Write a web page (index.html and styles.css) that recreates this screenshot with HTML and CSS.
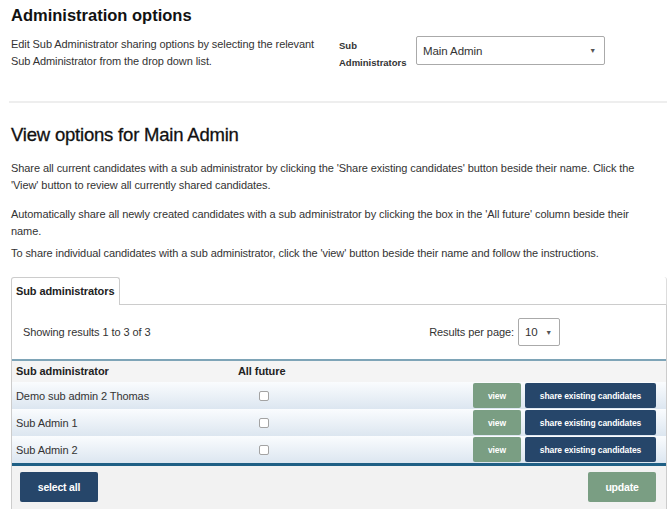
FILE: index.html
```html
<!DOCTYPE html>
<html>
<head>
<meta charset="utf-8">
<link rel="stylesheet" href="styles.css">
</head>
<body>
<div class="page">
  <h1 class="title">Administration options</h1>
  <div class="top">
    <p class="top-text">Edit Sub Administrator sharing options by selecting the relevant Sub Administrator from the drop down list.</p>
    <div class="top-label">Sub<br>Administrators</div>
    <div class="select big"><span>Main Admin</span><span class="arrow">▼</span></div>
  </div>
  <div class="divider"></div>
  <h2 class="subtitle">View options for Main Admin</h2>
  <p class="info">Share all current candidates with a sub administrator by clicking the 'Share existing candidates' button beside their name. Click the 'View' button to review all currently shared candidates.</p>
  <p class="info">Automatically share all newly created candidates with a sub administrator by clicking the box in the 'All future' column beside their name.</p>
  <p class="info last">To share individual candidates with a sub administrator, click the 'view' button beside their name and follow the instructions.</p>

  <div class="tabs"><div class="tab">Sub administrators</div><div class="tab-fill"></div></div>
  <div class="panel">
    <div class="panel-top">
      <span>Showing results 1 to 3 of 3</span>
      <div class="perpage"><span>Results per page:</span><div class="select small"><span>10</span><span class="arrow">▼</span></div></div>
    </div>
    <div class="grid">
      <div class="head name">Sub administrator</div>
      <div class="head fut">All future</div>
      <div class="head rest"></div>

      <div class="row">
        <div class="name">Demo sub admin 2 Thomas</div>
        <div class="fut"><span class="cb"></span></div>
        <div class="btns"><span class="btn green">view</span><span class="btn navy">share existing candidates</span></div>
      </div>
      <div class="row">
        <div class="name">Sub Admin 1</div>
        <div class="fut"><span class="cb"></span></div>
        <div class="btns"><span class="btn green">view</span><span class="btn navy">share existing candidates</span></div>
      </div>
      <div class="row">
        <div class="name">Sub Admin 2</div>
        <div class="fut"><span class="cb"></span></div>
        <div class="btns"><span class="btn green">view</span><span class="btn navy">share existing candidates</span></div>
      </div>
    </div>
    <div class="footer">
      <span class="fbtn navy">select all</span>
      <span class="fbtn green">update</span>
    </div>
  </div>
</div>
</body>
</html>
```
FILE: styles.css
```css
html, body { margin: 0; padding: 0; background: #fff; }
body { font-family: "Liberation Sans", Arial, sans-serif; color: #222; font-size: 11px; letter-spacing: -0.08px; }
.page { padding: 0 3px 0 11px; }
.title { font-size: 16.5px; font-weight: bold; margin: 0; padding-top: 4px; line-height: 22px; color: #111; letter-spacing: 0; }
.top { display: flex; align-items: flex-start; margin-top: 10px; }
.top-text { width: 318px; margin: 0; line-height: 17px; color: #333; }
.top-label { margin-left: 10px; width: 77px; font-size: 9.5px; font-weight: bold; line-height: 17px; color: #333; margin-top: 1px; letter-spacing: 0; }
.select { border: 1px solid #aaa; border-radius: 2px; background: #fff; display: flex; align-items: center; justify-content: space-between; box-sizing: border-box; color: #333; }
.select .arrow { font-size: 7px; color: #555; }
.select.big { width: 189px; height: 29px; padding: 0 8px 0 6px; font-size: 11.5px; }
.divider { height: 2px; background: #eeeeee; margin: 30px 0 0 -2px; }
.subtitle { font-size: 18.5px; font-weight: normal; -webkit-text-stroke: 0.3px #111; margin: 22px 0 0; line-height: 20px; color: #111; letter-spacing: -0.2px; }
.info { margin: 15px 0 0; padding-right: 14px; line-height: 17px; color: #333; }
.info + .info { margin-top: 12px; }
.info.last { margin-top: 5px; }
.tabs { display: flex; margin-top: 15px; align-items: flex-end; }
.tab { border: 1px solid #ccc; border-bottom: none; border-radius: 3px 3px 0 0; padding: 0 4px; height: 27px; line-height: 27px; font-weight: bold; color: #222; white-space: nowrap; width: 99px; letter-spacing: -0.1px; }
.tab-fill { flex: 1; border-bottom: 1px solid #ccc; border-right: 1px solid #ddd; height: 27px; border-radius: 0 3px 0 0; }
.panel { border-left: 1px solid #ccc; border-right: 1px solid #ccc; }
.panel-top { height: 54px; display: flex; align-items: center; justify-content: space-between; padding: 0 106px 0 11px; border-bottom: 2px solid #7ea4b7; color: #333; }
.perpage { display: flex; align-items: center; gap: 4px; }
.select.small { width: 42px; height: 28px; padding: 0 7px 0 6px; font-size: 11.5px; }
.grid { display: grid; grid-template-columns: 226px 234px 1fr; }
.head { background: #f4f4f4; height: 21px; line-height: 21px; font-weight: bold; color: #222; }
.head.name { padding-left: 4px; }
.row { display: contents; }
.row > div { height: 27px; display: flex; align-items: center; background: linear-gradient(#fafcfe, #dce6f0); }
.row .name { padding-left: 4px; color: #333; }
.fut { justify-content: flex-start; }
.cb { display: inline-block; width: 8px; height: 8px; border: 1px solid #a3a3a3; border-radius: 2px; background: #fff; margin-left: 21px; }
.btns { justify-content: flex-start; gap: 4px; padding-left: 1px; }
.btn { color: #fff; font-weight: bold; font-size: 8.5px; letter-spacing: -0.1px; height: 25px; display: flex; align-items: center; justify-content: center; border-radius: 2px; }
.green { background: #7a9e83; }
.navy { background: #26466a; }
.btn.green { width: 48px; }
.btn.navy { width: 131px; }
.footer { border-top: 3px solid #1f5f85; background: #f2f2f2; height: 50px; display: flex; justify-content: space-between; align-items: flex-start; padding: 6px 10px 0 8px; }
.fbtn { color: #fff; font-weight: bold; font-size: 10.5px; letter-spacing: -0.2px; height: 30px; display: flex; align-items: center; justify-content: center; border-radius: 2px; }
.fbtn.navy { width: 78px; }
.fbtn.green { width: 68px; }
```
